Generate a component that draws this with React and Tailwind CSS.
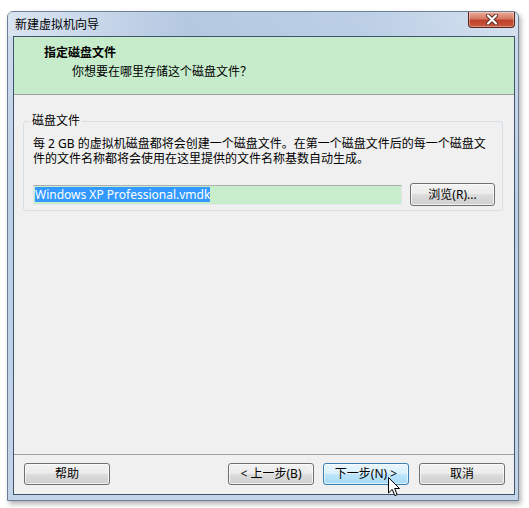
import React from "react";

const btn =
  "w-[86px] h-[22px] rounded-[3px] border border-[#707070] bg-[linear-gradient(to_bottom,#f2f2f2_0%,#ebebeb_50%,#dddddd_50%,#cfcfcf_100%)] text-[12px] leading-[20px] text-black flex items-center justify-center shadow-[inset_0_0_0_1px_rgba(255,255,255,0.7)]";

function CloseButton() {
  return (
    <div className="w-[47px] h-[16px] rounded-b-[4px] border border-t-0 border-[#5a2419] bg-[linear-gradient(to_bottom,#e9a996_0%,#d47a63_45%,#c1402a_55%,#c75a3e_100%)] flex items-center justify-center shadow-[inset_0_0_0_1px_rgba(255,255,255,0.35)]">
      <svg width="14" height="11" viewBox="0 0 14 11">
        <path d="M3 1.5 L11 9.5 M11 1.5 L3 9.5" stroke="#5b2a22" strokeWidth="4" strokeLinecap="round" />
        <path d="M3 1.5 L11 9.5 M11 1.5 L3 9.5" stroke="#ffffff" strokeWidth="2.2" strokeLinecap="round" />
      </svg>
    </div>
  );
}

function Cursor() {
  return (
    <svg className="absolute left-[388px] top-[477px]" width="13" height="20" viewBox="0 0 13 20">
      <path
        d="M0.5 0.5 L0.5 16 L4.2 12.4 L6.8 18.6 L9.2 17.6 L6.6 11.5 L11.5 11.5 Z"
        fill="#ffffff"
        stroke="#000000"
        strokeWidth="1"
        strokeLinejoin="miter"
      />
    </svg>
  );
}

export default function App() {
  return (
    <div className="relative w-[529px] h-[508px] bg-white pt-[11px] pl-[7px] font-['Noto_Sans','Noto_Sans_CJK_SC',sans-serif] text-[12px] text-black">
      {/* window frame */}
      <div className="w-[512px] h-[490px] flex flex-col rounded-t-[6px] border border-[#6c7f97] bg-[linear-gradient(to_bottom,#cfdced_0%,#bccfe5_40%,#c3d4e8_100%)] shadow-[2px_3px_5px_rgba(0,0,0,0.3)]">
        {/* title bar */}
        <div className="h-[24px] flex items-start justify-between pl-[7px] pr-[3px] bg-[linear-gradient(to_right,rgba(255,255,255,0.25)_0%,rgba(160,185,215,0.55)_35%,rgba(170,195,222,0.5)_70%,rgba(255,255,255,0.15)_100%)]">
          <span className="self-center leading-[16px] pt-[1px]">新建虚拟机向导</span>
          <CloseButton />
        </div>

        {/* client area */}
        <div className="ml-[5px] mr-[3px] h-[459px] border border-[#3f536d] bg-[#f0f0f0] flex flex-col">
          {/* header */}
          <div className="h-[58px] shrink-0 bg-[#c7eccb] border-b border-[#a0a0a0] pl-[30px] pt-[8px]">
            <div className="font-bold leading-[16px]">指定磁盘文件</div>
            <div className="ml-[28px] mt-[3px] leading-[16px]">你想要在哪里存储这个磁盘文件？</div>
          </div>

          {/* body */}
          <div className="flex-1 pt-[18px]">
            <fieldset className="ml-[9px] mr-[11px] border border-[#d5dfe5] rounded-[3px]">
              <legend className="ml-[6px] px-[2px] leading-[16px]">磁盘文件</legend>
              <div className="pl-[9px] pr-[6px] pt-[7px] pb-[4px]">
                <p className="leading-[15px]">
                  每 2 GB 的虚拟机磁盘都将会创建一个磁盘文件。在第一个磁盘文件后的每一个磁盘文
                  <br />
                  件的文件名称都将会使用在这里提供的文件名称基数自动生成。
                </p>
                <div className="mt-[17px] h-[23px] flex items-center gap-[8px]">
                  <div className="w-[369px] h-[20px] border border-[#abadb3] border-l-[#e2e3ea] border-r-[#e2e3ea] border-b-[#e3e9ef] bg-[#c7edcb] pl-[1px] flex items-center">
                    <span className="bg-[#3399ff] text-white leading-[15px] whitespace-nowrap">
                      Windows XP Professional.vmdk
                    </span>
                  </div>
                  <button className="w-[85px] h-[23px] rounded-[3px] border border-[#707070] bg-[linear-gradient(to_bottom,#f2f2f2_0%,#ebebeb_50%,#dddddd_50%,#cfcfcf_100%)] text-[12px] flex items-center justify-center shadow-[inset_0_0_0_1px_rgba(255,255,255,0.7)]">
                    浏览(R)...
                  </button>
                </div>
              </div>
            </fieldset>
          </div>

          {/* footer buttons */}
          <div className="h-[40px] shrink-0 border-t border-[#a0a0a0] pt-[8px] pl-[10px] pr-[9px] flex items-start justify-between">
            <button className={btn}>帮助</button>
            <div className="flex gap-[9px]">
              <button className={btn}>&lt; 上一步(B)</button>
              <button className="w-[86px] h-[22px] rounded-[3px] border border-[#3c7fb1] bg-[linear-gradient(to_bottom,#eaf6fd_0%,#d9f0fc_50%,#bee6fd_50%,#a7d9f5_100%)] text-[12px] flex items-center justify-center shadow-[inset_0_0_0_1px_rgba(255,255,255,0.6)]">
                下一步(N) &gt;
              </button>
              <button className={btn + " ml-[1px]"}>取消</button>
            </div>
          </div>
        </div>
      </div>
      <Cursor />
    </div>
  );
}
